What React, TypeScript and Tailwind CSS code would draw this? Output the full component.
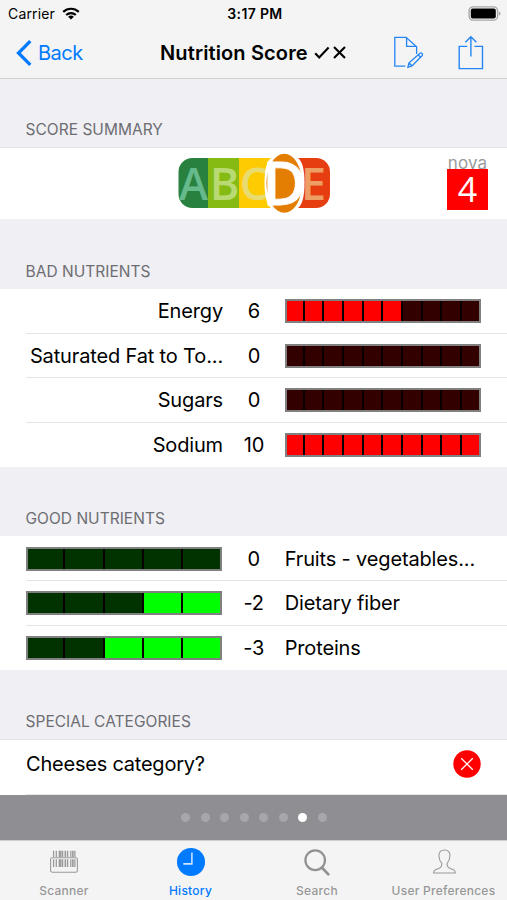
import type { ReactNode } from "react";
import clsx from "clsx";

interface Nutrient {
	label: string;
	points: number;
	level: number;
}

const BAD_NUTRIENTS: Nutrient[] = [
	{ label: "Energy", points: 6, level: 6 },
	{ label: "Saturated Fat to To...", points: 0, level: 0 },
	{ label: "Sugars", points: 0, level: 0 },
	{ label: "Sodium", points: 10, level: 10 },
];

const GOOD_NUTRIENTS: Nutrient[] = [
	{ label: "Fruits - vegetables...", points: 0, level: 0 },
	{ label: "Dietary fiber", points: -2, level: 2 },
	{ label: "Proteins", points: -3, level: 3 },
];

const PAGE_COUNT = 8;
const CURRENT_PAGE = 6;

export default function App() {
	return (
		<div className="flex h-[900px] w-[507px] flex-col overflow-hidden bg-[#efeff4] font-['Inter',sans-serif] text-black">
			<header className="h-[79px] shrink-0 border-b border-[#d2d2d5] bg-[#f4f4f4]">
				<StatusBar />
				<NavigationBar />
			</header>

			<main className="min-h-0 flex-1 overflow-hidden">
				<SectionTitle className="h-[68px]">SCORE SUMMARY</SectionTitle>
				<section className="flex h-[72px] items-start border-t border-[#e2e2e5] bg-white">
					<div className="ml-[177px] mt-[5px]">
						<NutriScore />
					</div>
					<NovaBadge />
				</section>

				<SectionTitle className="h-[70px]">BAD NUTRIENTS</SectionTitle>
				<section className="bg-white">
					{BAD_NUTRIENTS.map((nutrient, index) => (
						<NutrientRow key={nutrient.label} first={index === 0}>
							<span className="w-[197px] whitespace-nowrap text-right">
								{nutrient.label}
							</span>
							<Points value={nutrient.points} />
							<LevelBar segments={10} level={nutrient.level} tone="bad" />
						</NutrientRow>
					))}
				</section>

				<SectionTitle className="h-[69px]">GOOD NUTRIENTS</SectionTitle>
				<section className="bg-white">
					{GOOD_NUTRIENTS.map((nutrient, index) => (
						<NutrientRow key={nutrient.label} first={index === 0}>
							<LevelBar segments={5} level={nutrient.level} tone="good" />
							<Points value={nutrient.points} className="ml-[0.7px]" />
							<span className="whitespace-nowrap">{nutrient.label}</span>
						</NutrientRow>
					))}
				</section>

				<SectionTitle className="h-[69.2px]">SPECIAL CATEGORIES</SectionTitle>
				<section className="h-[57.6px] border-t border-[#e2e2e5] bg-white pl-[26px]">
					<div className="flex h-[55px] items-start justify-between border-b border-[#e6e6e8] pr-[26px] pt-[10px]">
						<span className="text-[20px] leading-[28px] tracking-[-0.22px]">
							Cheeses category?
						</span>
						<svg width="28" height="28" viewBox="0 0 28 28">
							<circle cx="14" cy="14" r="13.7" fill="#ff0000" />
							<path
								d="M8.2 8.2l11.6 11.6M19.8 8.2L8.2 19.8"
								stroke="#fff"
								strokeWidth="1.3"
							/>
						</svg>
					</div>
				</section>
			</main>

			<div className="flex h-[45px] shrink-0 items-center justify-center gap-[10.6px] bg-[#8e8e93] pl-px">
				{Array.from({ length: PAGE_COUNT }, (_, index) => (
					<span
						key={index}
						className={clsx(
							"size-[9px] rounded-full",
							index === CURRENT_PAGE ? "bg-white" : "bg-[#a7a7ab]",
						)}
					/>
				))}
			</div>

			<TabBar />
		</div>
	);
}

function StatusBar() {
	return (
		<div className="grid h-[27px] grid-cols-3 items-center pl-[8px] pr-[6px] text-[14px]">
			<div className="flex items-center gap-[7px]">
				<span className="tracking-[0.15px]">Carrier</span>
				<svg width="18" height="13" viewBox="0 0 18 13" fill="none" stroke="#000">
					<path d="M1.2 4.9a11.2 11.2 0 0 1 15.6 0" strokeWidth="2.2" />
					<path d="M4.2 8a7 7 0 0 1 9.6 0" strokeWidth="2.1" />
					<path d="M9 12.6L6.1 9.8a4.2 4.2 0 0 1 5.8 0z" fill="#000" stroke="none" />
				</svg>
			</div>
			<span className="pl-px text-center text-[14px] font-semibold tracking-[0.35px]">
				3:17 PM
			</span>
			<svg
				className="justify-self-end"
				width="33"
				height="15"
				viewBox="0 0 33 15"
			>
				<rect x="1.1" y="0.8" width="28.5" height="13.4" rx="4" fill="#f4f4f4" stroke="#a5a5a5" strokeWidth="1.3" />
				<rect x="2.8" y="2.6" width="25" height="9.8" rx="2" fill="#000" />
				<path d="M30.9 5.2q1.6.8 1.6 2.3t-1.6 2.3z" fill="#a5a5a5" />
			</svg>
		</div>
	);
}

function NavigationBar() {
	return (
		<div className="flex h-[51px] items-center">
			<div className="flex w-[160px] items-center pl-[16px] text-[#007aff]">
				<svg width="16" height="26" viewBox="0 0 16 26" fill="none">
					<path d="M14.3 1.2L2.5 13l11.8 11.8" stroke="#007aff" strokeWidth="3.3" />
				</svg>
				<span className="ml-[6px] text-[20px] tracking-[-0.5px]">Back</span>
			</div>

			<h1 className="flex w-[233px] items-center whitespace-nowrap text-[20px] font-semibold tracking-[0.13px]">
				Nutrition Score
				<svg className="ml-[6px]" width="34" height="16" viewBox="0 0 34 16" fill="none" stroke="#000" strokeWidth="2.1">
					<path d="M1.2 8.2l4 4.2L14.6 2.6" />
					<path d="M20 2l11 11M31 2l-11 11" />
				</svg>
			</h1>

			<svg width="31" height="34" viewBox="0 0 31 34" fill="none" stroke="#2485f5" strokeWidth="1.3">
				<path d="M12.3 30.2H1.8V1.3H13l10.6 9.4v7.2" />
				<path d="M13.6 1.6v8.8h9.6" />
				<path d="M14.9 31.2l1.1-4.4L27 17.2q1.2-.8 2.1.2t.1 2.1L19 30zM16 26.8l3 3.2M25.2 18.9l2.9 2.8" />
			</svg>

			<svg className="ml-[34px]" width="26" height="36" viewBox="0 0 26 36" fill="none" stroke="#2485f5" strokeWidth="1.4">
				<path d="M9.3 11.4H1.2v22.2h23.3V11.4h-8.1" />
				<path d="M12.9 21.5V1.9M7.4 7.2l5.5-5.5 5.5 5.5" />
			</svg>
		</div>
	);
}

function SectionTitle({
	className,
	children,
}: {
	className: string;
	children: ReactNode;
}) {
	return (
		<h2
			className={clsx(
				"flex items-end pb-[7.5px] pl-[25.5px] text-[15.5px] leading-[20px] tracking-[0.02px] text-[#6d6d72]",
				className,
			)}
		>
			{children}
		</h2>
	);
}

function NutriScore() {
	return (
		<svg width="154" height="62" viewBox="0 0 154 62">
			<path d="M15.5 5H31v50H15.5A14 14 0 0 1 1.5 41V19A14 14 0 0 1 15.5 5z" fill="#28813e" />
			<path d="M31 5h31v50H31z" fill="#85bb13" />
			<path d="M62 5h32v50H62z" fill="#fecb02" />
			<path d="M118 5h21a14 14 0 0 1 14 14v22a14 14 0 0 1-14 14h-21z" fill="#e63e11" />
			<g fontFamily="Open Sans, sans-serif" fontWeight="600" fontSize="45" textAnchor="middle">
				<text x="16.5" y="47" fill="#65b98a" textLength="29" lengthAdjust="spacingAndGlyphs">A</text>
				<text x="47.5" y="47" fill="#b9da73">B</text>
				<text x="77" y="47" fill="#e8dc71">C</text>
				<text x="136.5" y="47" fill="#ee9d65">E</text>
			</g>
			<path d="M94 5h27q6.5 5 6.500 25t-6.500 25H94q-6.500-5-6.500-25T94 5z" fill="#fff" />
			<ellipse cx="107.300" cy="30.300" rx="17.800" ry="29.500" fill="#e37e03" />
			<text x="85.300" y="51.500" textLength="44" lengthAdjust="spacingAndGlyphs" fill="#fff" stroke="#fff" strokeWidth="0.800" fontFamily="Open Sans, sans-serif" fontWeight="600" fontSize="59">D</text>
		</svg>
	);
}

function NovaBadge() {
	return (
		<div className="ml-[116px] mt-[6px] w-[41px]">
			<div className="h-[15px] overflow-hidden text-center text-[17px] leading-[19px] tracking-[0.1px] text-[#9b9b9b]">
				nova
			</div>
			<div className="flex h-[41px] items-center justify-center bg-[#ff0000] pb-px font-['Open_Sans',sans-serif] text-[34px] leading-none text-white">
				4
			</div>
		</div>
	);
}

function NutrientRow({
	first,
	children,
}: {
	first: boolean;
	children: ReactNode;
}) {
	return (
		<div className="relative flex h-[44.6px] items-center pl-[26px] text-[20px] tracking-[-0.15px]">
			{!first && (
				<span className="absolute left-[26px] right-0 top-[-1px] h-px bg-[#e4e4e6]" />
			)}
			{children}
		</div>
	);
}

function Points({ value, className }: { value: number; className?: string }) {
	return (
		<span className={clsx("w-[62px] shrink-0 text-center", className)}>
			{value}
		</span>
	);
}

function LevelBar({
	segments,
	level,
	tone,
}: {
	segments: number;
	level: number;
	tone: "good" | "bad";
}) {
	// bad nutrients fill from the left, good ones from the right
	const isLit = (index: number) =>
		tone === "bad" ? index < level : index >= segments - level;

	return (
		<div className="relative flex h-[24px] w-[196px] shrink-0 bg-[#808080] pr-[1.500px]">
			{Array.from({ length: segments }, (_, index) => (
				<span
					key={index}
					className={clsx(
						"h-full flex-1",
						index < segments - 1 && "border-r-[2px] border-[#080000]",
						tone === "bad" && (isLit(index) ? "bg-[#ff0000]" : "bg-[#330000]"),
						tone === "good" && (isLit(index) ? "bg-[#00ff00]" : "bg-[#003300]"),
					)}
				/>
			))}
			<span className="absolute inset-0 border-2 border-[#808080]" />
		</div>
	);
}

function TabBar() {
	return (
		<nav className="flex h-[60px] shrink-0 border-t border-[#cfcfd1] bg-[#f4f4f4]">
			<Tab label="Scanner" className="w-[128px]">
				<svg width="32" height="32" viewBox="0 0 32 32" fill="none" stroke="#999">
					<rect x="1.2" y="10.7" width="29.6" height="16" rx="2" strokeWidth="1.2" />
					<path d="M4.5 3v7M7.5 3v7M14.5 3v7M20 3v7M23.5 3v7M28 3v7M4.5 12.500V21M7.500 12.500V21M14.500 12.500V21M20 12.500V21M23.500 12.500V21M28 12.500V21" strokeWidth="1.400" />
					<path d="M11 3v7M17.500 3v7M25.800 3v7M11 12.500V21M17.500 12.500V21M25.800 12.500V21" strokeWidth="1.800" />
					<path d="M12.500 3v7M12.500 12.500V21" strokeWidth="1.600" />
				</svg>
			</Tab>
			<Tab label="History" className="w-[125px]" active>
				<svg width="32" height="32" viewBox="0 0 32 32">
					<circle cx="16" cy="15.5" r="15.5" fill="#007aff" />
					<path d="M17 5v12.5H7.5" fill="none" stroke="#cfe5ff" strokeWidth="1.7" />
				</svg>
			</Tab>
			<Tab label="Search" className="w-[128px]">
				<svg width="32" height="32" viewBox="0 0 32 32" fill="none" stroke="#929292">
					<circle cx="14" cy="13.500" r="10.800" strokeWidth="2.500" />
					<path d="M21.300 21.500l8 8.500" strokeWidth="3" />
				</svg>
			</Tab>
			<Tab label="User Preferences" className="w-[125px]">
				<svg width="32" height="32" viewBox="0 0 32 32" fill="none" stroke="#999" strokeWidth="1.2">
					<path d="M16.500 2.200c-4.200 0-6.200 2.500-6.100 6 .1 3.400 1 6.400 3.100 8.700.6 3.300-.5 4.400-3.500 5.600-4 1.500-5.300 2-5.500 5h24c-.2-3-1.500-3.500-5.500-5-3-1.200-4.100-2.300-3.500-5.600 2.100-2.300 3-5.300 3.100-8.700.1-3.500-1.900-6-6.100-6z" />
				</svg>
			</Tab>
		</nav>
	);
}

function Tab({
	label,
	className,
	active = false,
	children,
}: {
	label: string;
	className: string;
	active?: boolean;
	children: ReactNode;
}) {
	return (
		<div
			className={clsx(
				"flex flex-col items-center pt-[7px] text-[12px] font-medium",
				active ? "text-[#007aff]" : "text-[#989898]",
				className,
			)}
		>
			{children}
			<span className="mt-[5px] whitespace-nowrap leading-[18px] tracking-[0.25px]">
				{label}
			</span>
		</div>
	);
}
